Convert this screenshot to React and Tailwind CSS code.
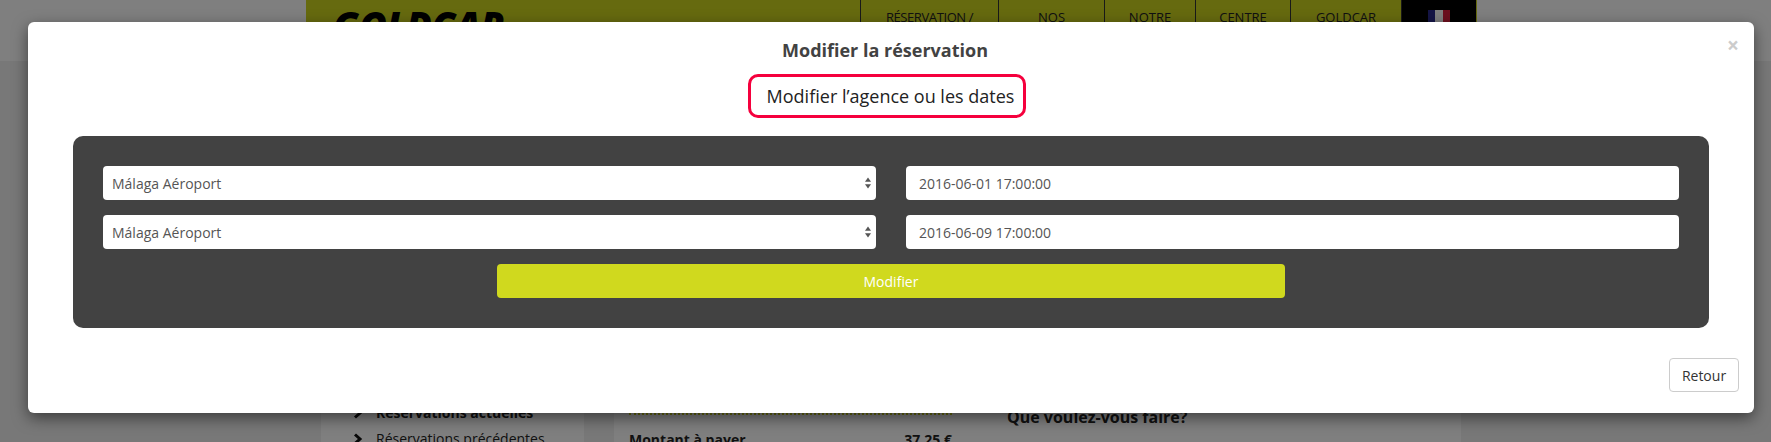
import React from "react";

const font = { fontFamily: '"Open Sans", sans-serif' };

const NavItem = ({ label, className }) => (
  <div className={`border-l border-[#333] flex justify-center pt-[8px] text-[13px] leading-[18px] text-[#222] ${className}`}>{label}</div>
);

const SelectBox = ({ value }) => (
  <div className="h-[34px] bg-white rounded-[4px] flex items-center justify-between pl-[9px] pr-[4px] text-[14px] text-[#555]">
    <span>{value}</span>
    <svg width="8" height="12" viewBox="0 0 8 12" className="fill-[#555]">
      <path d="M4 0.5 7 4.8H1Z" />
      <path d="M4 11.5 7 7.2H1Z" />
    </svg>
  </div>
);

const DateBox = ({ value }) => (
  <div className="h-[34px] bg-white rounded-[4px] flex items-center pl-[13px] text-[14px] text-[#555]">{value}</div>
);

const SideLink = ({ label, bold }) => (
  <div className={`flex items-center gap-[13px] ${bold ? "font-bold" : ""}`}>
    <svg width="10" height="12" viewBox="0 0 10 12" className="fill-none stroke-[#111] stroke-[3]">
      <path d="M2 1.5 7 6 2 10.5" />
    </svg>
    <span>{label}</span>
  </div>
);

export default function App() {
  return (
    <div className="relative w-[1771px] h-[442px] overflow-hidden bg-[#f0f0f0]" style={font}>
      {/* page behind the modal */}
      <div className="h-[61px] bg-white">
        <div className="ml-[306px] w-[1171px] h-[61px] bg-[#cdd41f] flex">
          <div className="w-[554px] pl-[27px] pt-[3px] text-[38px] leading-[44px] font-extrabold italic text-black tracking-[-0.5px]">GOLDCAR</div>
          <NavItem label="RÉSERVATION /" className="w-[138px] tracking-[-0.4px]" />
          <NavItem label="NOS" className="w-[106px]" />
          <NavItem label="NOTRE" className="w-[91px]" />
          <NavItem label="CENTRE" className="w-[95px]" />
          <NavItem label="GOLDCAR" className="w-[112px] border-r" />
          <div className="w-[74px] bg-black flex justify-center pt-[10px]">
            <div className="w-[22px] h-[16px] flex">
              <div className="flex-1 bg-[#2a2a8c]" />
              <div className="flex-1 bg-white" />
              <div className="flex-1 bg-[#d81e3c]" />
            </div>
          </div>
        </div>
      </div>
      <div className="ml-[321px] mt-[339px] flex gap-[30px]">
        <div className="w-[263px] h-[60px] bg-white pl-[32px] text-[14px] leading-[26px] text-[#222]">
          <SideLink label="Réservations actuelles" bold />
          <SideLink label="Réservations précédentes" />
        </div>
        <div className="w-[847px] h-[60px] bg-white pl-[15px] flex">
          <div className="w-[323px]">
            <div className="mt-[13px] border-t-2 border-dotted border-[#cdd41f]" />
            <div className="mt-[15px] flex justify-between text-[14px] leading-[20px] font-bold text-[#222]">
              <span>Montant à payer</span>
              <span>37,25 €</span>
            </div>
          </div>
          <div className="ml-[55px] pt-[6px] text-[16px] leading-[22px] font-bold text-[#222]">Que voulez-vous faire?</div>
        </div>
      </div>

      {/* dimmed backdrop and modal */}
      <div className="absolute inset-0 bg-black/50 pt-[22px] pl-[28px] pr-[17px]">
        <div className="relative h-[391px] bg-white rounded-[6px] shadow-[0_5px_15px_rgba(0,0,0,0.5)] px-[45px]">
          <button className="absolute right-[15px] top-[13px] text-[21px] leading-[21px] font-bold text-[#ccc]">×</button>
          <h4 className="pt-[16px] pr-[12px] text-center text-[18px] leading-[25px] font-bold text-[#424242]">Modifier la réservation</h4>
          <div className="mt-[11px] pr-[8px] flex justify-center">
            <div className="h-[44px] w-[278px] border-[3px] border-[#f5003d] rounded-[10px] flex items-center justify-center pl-[7px] text-[18px] text-[#222]">
              Modifier l’agence ou les dates
            </div>
          </div>
          <div className="mt-[18px] h-[192px] bg-[#424242] rounded-[10px] p-[30px]">
            <div className="grid grid-cols-2 gap-x-[30px] gap-y-[15px]">
              <SelectBox value="Málaga Aéroport" />
              <DateBox value="2016-06-01 17:00:00" />
              <SelectBox value="Málaga Aéroport" />
              <DateBox value="2016-06-09 17:00:00" />
            </div>
            <button className="block ml-[394px] mt-[15px] w-[788px] h-[34px] bg-[#d0d91e] rounded-[4px] text-[14px] font-medium text-white">Modifier</button>
          </div>
          <div className="mt-[30px] -mr-[30px] flex justify-end">
            <button className="h-[34px] w-[70px] border border-[#ccc] rounded-[4px] text-[14px] text-[#333] bg-white">Retour</button>
          </div>
        </div>
      </div>
    </div>
  );
}
